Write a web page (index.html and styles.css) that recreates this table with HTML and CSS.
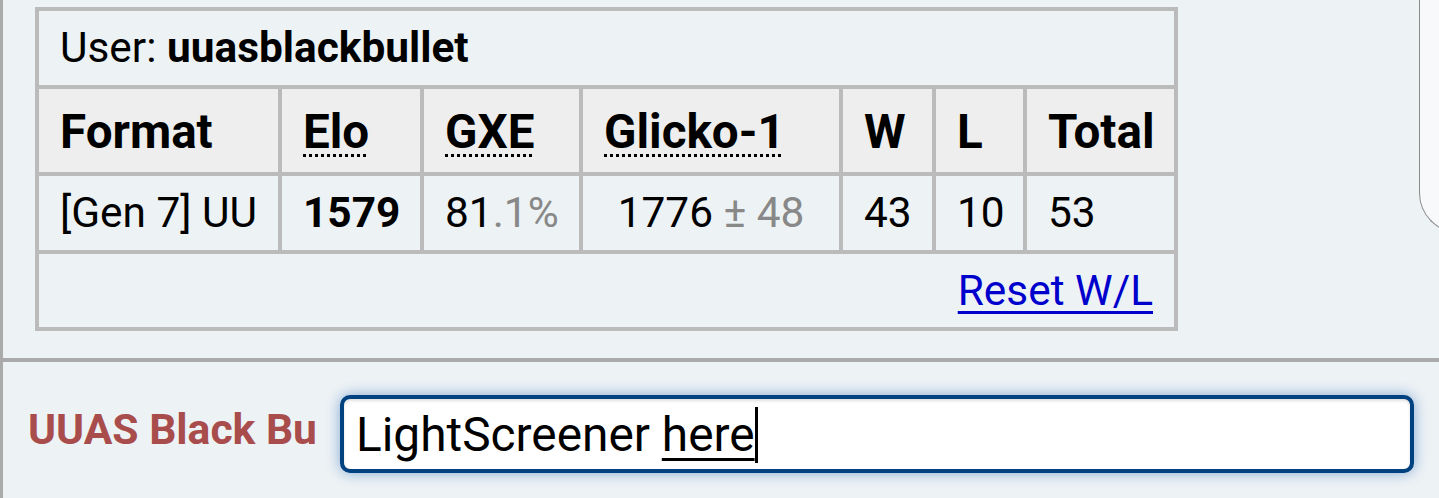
FILE: index.html
```html
<!DOCTYPE html>
<html>
<head>
<meta charset="utf-8">
<link rel="stylesheet" href="styles.css">
</head>
<body>
<div class="room">
  <div class="log">
    <table class="ranks">
      <colgroup>
        <col class="c-format"><col class="c-elo"><col class="c-gxe"><col class="c-glicko"><col class="c-w"><col class="c-l"><col class="c-total">
      </colgroup>
      <tr class="user-row"><td colspan="7">User: <strong>uuasblackbullet</strong></td></tr>
      <tr class="head-row">
        <th>Format</th>
        <th><abbr>Elo</abbr></th>
        <th><abbr>GXE</abbr></th>
        <th><abbr>Glicko-1</abbr></th>
        <th>W</th>
        <th>L</th>
        <th>Total</th>
      </tr>
      <tr class="data-row">
        <td>[Gen 7] UU</td>
        <td><strong>1579</strong></td>
        <td>81<span class="dim">.1%</span></td>
        <td class="center">1776<span class="dim"> ± 48</span></td>
        <td>43</td>
        <td>10</td>
        <td>53</td>
      </tr>
      <tr class="foot-row"><td colspan="7"><a href="#">Reset W/L</a></td></tr>
    </table>
    <div class="side-bubble"></div>
  </div>
  <div class="composer">
    <div class="name">UUAS Black Bu</div>
    <div class="textbox">LightScreener <span class="compose">here</span></div>
  </div>
</div>
</body>
</html>
```
FILE: styles.css
```css
html, body {
  margin: 0;
  padding: 0;
  background: #edf2f5;
  font-family: Roboto, "Noto Sans", sans-serif;
  color: #000;
}
.room {
  border-left: 3px solid #aaaaaa;
  height: 498px;
  box-sizing: border-box;
  overflow: hidden;
}
.log {
  position: relative;
  height: 358px;
  padding: 7px 0 0 32px;
  box-sizing: border-box;
}
.ranks {
  border-collapse: collapse;
  border: 4px solid #bbbbbb;
  table-layout: fixed;
  width: 1143px;
  font-size: 42.4px;
}
.c-format { width: 243px; }
.c-elo { width: 142px; }
.c-gxe { width: 159px; }
.c-glicko { width: 260px; }
.c-w { width: 93px; }
.c-l { width: 91px; }
.c-total { width: 151px; }
.ranks td, .ranks th {
  border: 4px solid #bbbbbb;
  padding: 0 0 0 21px;
  text-align: left;
  vertical-align: middle;
  white-space: nowrap;
  line-height: 50px;
}
.user-row td { height: 74px; padding-top: 0; }
.head-row th {
  height: 81px;
  background: #eeeeee;
  font-size: 47.6px;
  font-weight: 700;
  padding-top: 2px;
}
.head-row abbr {
  text-decoration: underline dotted;
  text-decoration-thickness: 3px;
  text-underline-offset: 6px;
}
.data-row td { height: 74px; padding-top: 0; }
.data-row td.center { text-align: center; padding-left: 0; }
.dim { color: #888888; }
.foot-row td { height: 73px; text-align: right; padding: 0 21px 0 0; }
.foot-row a { color: #0000cc; text-decoration-thickness: 3px; text-underline-offset: 6px; }
.side-bubble {
  position: absolute;
  left: 1416px;
  top: -10px;
  width: 60px;
  height: 243px;
  border-left: 1.5px solid #8a8a8a;
  border-bottom: 1.5px solid #8a8a8a;
  border-bottom-left-radius: 40px;
  background: #f8f9fa;
  box-sizing: border-box;
}
.composer {
  border-top: 4px solid #aaaaaa;
  display: flex;
  align-items: center;
  padding: 33px 0 0 25px;
  gap: 18px;
}
.name {
  width: 294px;
  font-size: 42.6px;
  font-weight: 700;
  color: #a84c4c;
  white-space: nowrap;
  overflow: hidden;
  margin-top: -10px;
}
.textbox {
  box-sizing: border-box;
  width: 1074px;
  height: 78px;
  border: 4px solid #00427f;
  border-radius: 10px;
  background: #ffffff;
  box-shadow: 0 0 14px rgba(0, 80, 170, 0.45), inset 0 2px 3px rgba(0,0,0,0.12);
  font-size: 47.8px;
  padding: 9px 0 0 12px;
  line-height: 54px;
  white-space: nowrap;
}
.compose {
  text-decoration: underline;
  text-decoration-thickness: 3px;
  text-underline-offset: 7px;
  border-right: 3px solid #000;
}
```
